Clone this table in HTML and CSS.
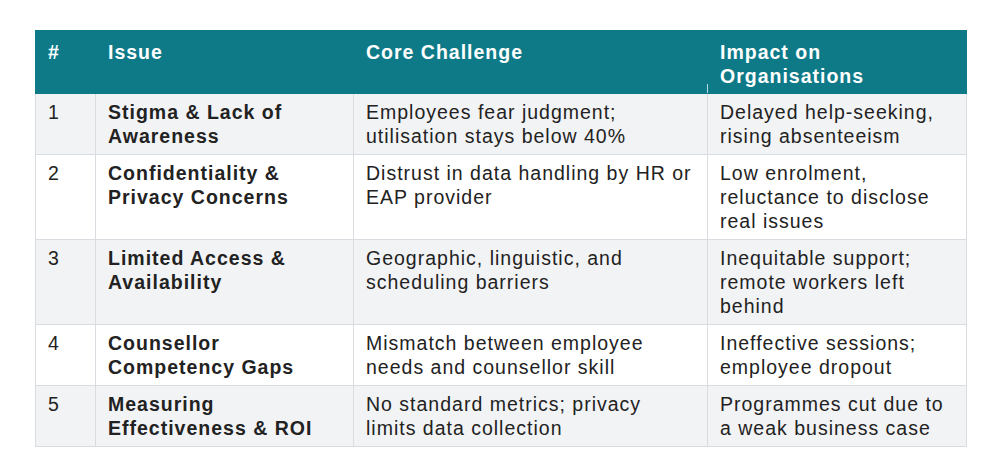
FILE: index.html
```html
<!DOCTYPE html>
<html lang="en">
<head>
<meta charset="utf-8">
<title>EAP Challenges</title>
<link rel="stylesheet" href="styles.css">
</head>
<body>
<div class="page">
<table class="issues">
  <colgroup>
    <col class="c-num">
    <col class="c-issue">
    <col class="c-core">
    <col class="c-impact">
  </colgroup>
  <thead>
    <tr>
      <th>#</th>
      <th>Issue</th>
      <th>Core Challenge</th>
      <th class="impact-head">Impact on Organisations</th>
    </tr>
  </thead>
  <tbody>
    <tr>
      <td>1</td>
      <td class="issue">Stigma &amp; Lack of Awareness</td>
      <td>Employees fear judgment; utilisation stays below 40%</td>
      <td>Delayed help-seeking, rising absenteeism</td>
    </tr>
    <tr>
      <td>2</td>
      <td class="issue">Confidentiality &amp; Privacy Concerns</td>
      <td>Distrust in data handling by HR or EAP provider</td>
      <td>Low enrolment, reluctance to disclose real issues</td>
    </tr>
    <tr>
      <td>3</td>
      <td class="issue">Limited Access &amp; Availability</td>
      <td>Geographic, linguistic, and scheduling barriers</td>
      <td>Inequitable support; remote workers left behind</td>
    </tr>
    <tr>
      <td>4</td>
      <td class="issue">Counsellor Competency Gaps</td>
      <td>Mismatch between employee needs and counsellor skill</td>
      <td>Ineffective sessions; employee dropout</td>
    </tr>
    <tr>
      <td>5</td>
      <td class="issue">Measuring Effectiveness &amp; ROI</td>
      <td>No standard metrics; privacy limits data collection</td>
      <td>Programmes cut due to a weak business case</td>
    </tr>
  </tbody>
</table>
</div>
</body>
</html>
```

FILE: styles.css
```css
html, body {
  margin: 0;
  padding: 0;
  background: #ffffff;
}

.page {
  padding: 30px 0 0 35px;
}

.issues {
  width: 931px;
  border-collapse: collapse;
  table-layout: fixed;
  font-family: "Liberation Sans", Arial, sans-serif;
  font-size: 19.5px;
  letter-spacing: 1px;
  line-height: 24px;
  color: #222222;
}

.c-num { width: 60px; }
.c-issue { width: 258px; }
.c-core { width: 354px; }
.c-impact { width: 259px; }

.issues th {
  background: #0e7a88;
  color: #ffffff;
  font-weight: bold;
  text-align: left;
  vertical-align: top;
  padding: 9px 12px 5px 12px;
  border: 1px solid #0e7a88;
}

.issues th.impact-head {
  position: relative;
}

.issues th.impact-head::before {
  content: "";
  position: absolute;
  left: -1px;
  bottom: 0;
  width: 1px;
  height: 9px;
  background: #b9dbe0;
}

.issues td {
  vertical-align: top;
  text-align: left;
  padding: 6px 12px 6px 12px;
  border: 1px solid #d9dde2;
}

.issues tbody tr:nth-child(odd) td {
  background: #f2f3f5;
}

.issues tbody tr:nth-child(even) td {
  background: #ffffff;
}

.issues td.issue {
  font-weight: bold;
}
```
